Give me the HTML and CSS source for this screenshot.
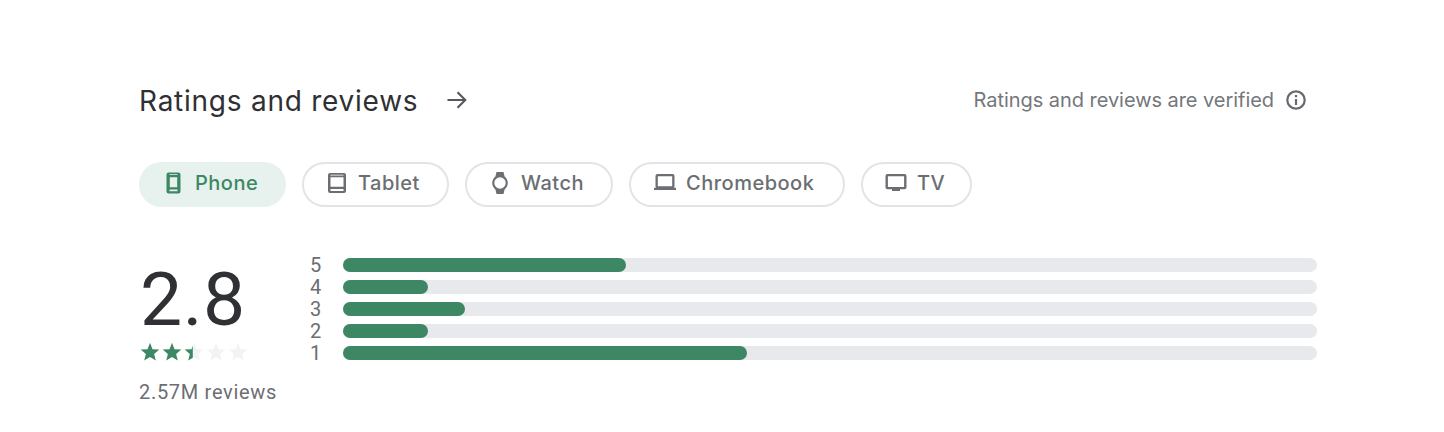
FILE: index.html
```html
<!DOCTYPE html>
<html lang="en">
<head>
  <meta charset="UTF-8">
  <meta name="viewport" content="width=device-width, initial-scale=1.0">
  <title>Ratings and reviews</title>
  <link rel="stylesheet" href="styles.css">
</head>
<body>
  <section class="ratings">
    <header class="ratings-header">
      <h2>Ratings and reviews</h2>
      <svg class="arrow" viewBox="0 0 20 20"><path d="M0.5 10H18M10.5 2.2L18.3 10L10.5 17.8"/></svg>
      <div class="verified">
        <span>Ratings and reviews are verified</span>
        <svg class="info" viewBox="0 0 20 20"><circle cx="10" cy="10" r="8.7"/><path d="M10 9V15M10 5V7.2"/></svg>
      </div>
    </header>

    <div class="chips">
      <button type="button" class="chip chip-phone active">
        <svg viewBox="0 0 22 22"><path fill-rule="evenodd" d="M5.5 0.5H15.5A2 2 0 0 1 17.5 2.5V19.5A2 2 0 0 1 15.5 21.5H5.5A2 2 0 0 1 3.5 19.5V2.5A2 2 0 0 1 5.5 0.5ZM6.5 2.2V3.1H14.5V2.2ZM6.8 5.2V15.2H14.2V5.2ZM6.5 17.6V19.2H14.5V17.6Z"/></svg>
        <span>Phone</span>
      </button>
      <button type="button" class="chip chip-tablet">
        <svg viewBox="0 0 22 22"><path fill-rule="evenodd" d="M4 1H18A2 2 0 0 1 20 3V19A2 2 0 0 1 18 21H4A2 2 0 0 1 2 19V3A2 2 0 0 1 4 1ZM4.5 2.8V3.4H17.5V2.8ZM4.5 5.3V14.8H17.5V5.3ZM4.5 17V19H17.5V17Z"/></svg>
        <span>Tablet</span>
      </button>
      <button type="button" class="chip chip-watch">
        <svg viewBox="0 0 22 22"><path fill-rule="evenodd" d="M7.5 0H14.5L15.6 4.6A8 8 0 0 1 15.6 17.4L14.5 22H7.5L6.4 17.4A8 8 0 0 1 6.4 4.6ZM11 5.3A5.7 5.7 0 1 0 11 16.7A5.7 5.7 0 1 0 11 5.3Z"/></svg>
        <span>Watch</span>
      </button>
      <button type="button" class="chip chip-chromebook">
        <svg viewBox="0 0 22 22"><path fill-rule="evenodd" d="M3.5 2H18.5A2 2 0 0 1 20.5 4V14A2 2 0 0 1 19.8 15.8H22V18H0V15.8H2.2A2 2 0 0 1 1.5 14V4A2 2 0 0 1 3.5 2ZM3.8 4.2V14.2H18.2V4.2Z"/></svg>
        <span>Chromebook</span>
      </button>
      <button type="button" class="chip chip-tv">
        <svg viewBox="0 0 22 22"><path fill-rule="evenodd" d="M2.5 2H19.5A2 2 0 0 1 21.5 4V15.3A2 2 0 0 1 19.5 17.3H15V19H7V17.3H2.5A2 2 0 0 1 0.5 15.3V4A2 2 0 0 1 2.5 2ZM2.9 4.2V15H19.1V4.2Z"/></svg>
        <span>TV</span>
      </button>
    </div>

    <div class="summary">
      <div class="score">
        <div class="score-value">2.8</div>
        <div class="stars">
          <svg viewBox="0 0 20 20"><path class="on" d="M10 .8L12.5 7.2L19.3 7.6L14.1 12L15.8 18.6L10 15L4.2 18.6L5.9 12L.7 7.6L7.5 7.2Z"/></svg>
          <svg viewBox="0 0 20 20"><path class="on" d="M10 .8L12.5 7.2L19.3 7.6L14.1 12L15.8 18.6L10 15L4.2 18.6L5.9 12L.7 7.6L7.5 7.2Z"/></svg>
          <svg viewBox="0 0 20 20"><path class="off" d="M10 .8L12.5 7.2L19.3 7.6L14.1 12L15.8 18.6L10 15L4.2 18.6L5.9 12L.7 7.6L7.5 7.2Z"/><path class="on" d="M8.8 3.9L7.5 7.2L.7 7.6L5.9 12L4.2 18.6L8.8 15.7Z"/></svg>
          <svg viewBox="0 0 20 20"><path class="off" d="M10 .8L12.5 7.2L19.3 7.6L14.1 12L15.8 18.6L10 15L4.2 18.6L5.9 12L.7 7.6L7.5 7.2Z"/></svg>
          <svg viewBox="0 0 20 20"><path class="off" d="M10 .8L12.5 7.2L19.3 7.6L14.1 12L15.8 18.6L10 15L4.2 18.6L5.9 12L.7 7.6L7.5 7.2Z"/></svg>
        </div>
        <div class="review-count">2.57M reviews</div>
      </div>

      <div class="bars">
        <div class="bar-row"><span>5</span><div class="track"><div class="fill" style="width: 29.1%"></div></div></div>
        <div class="bar-row"><span>4</span><div class="track"><div class="fill" style="width: 8.75%"></div></div></div>
        <div class="bar-row"><span>3</span><div class="track"><div class="fill" style="width: 12.55%"></div></div></div>
        <div class="bar-row"><span>2</span><div class="track"><div class="fill" style="width: 8.75%"></div></div></div>
        <div class="bar-row"><span>1</span><div class="track"><div class="fill" style="width: 41.45%"></div></div></div>
      </div>
    </div>
  </section>
</body>
</html>
```
FILE: styles.css
```css
* {
  box-sizing: border-box;
}
body {
  margin: 0;
  background-color: #fff;
  color: #6b6e72;
  font-family: Roboto, Arial, sans-serif;
}
.ratings {
  padding: 80px 127px 0 139px;
}
.ratings-header {
  display: flex;
  align-items: center;
  height: 40px;
  padding-right: 11px;
}
.ratings-header h2 {
  width: 279px;
  margin: 0;
  padding-top: 1px;
  color: #2f3033;
  font-family: Inter, sans-serif;
  font-size: 28px;
  font-weight: 400;
  letter-spacing: 0.75px;
  line-height: 40px;
  white-space: nowrap;
}
.arrow {
  width: 20px;
  height: 20px;
  margin-left: 29px;
  fill: none;
  stroke: #55585c;
  stroke-width: 2.1;
}
.verified {
  display: flex;
  align-items: center;
  gap: 12px;
  margin-left: auto;
  color: #74777b;
  font-family: Inter, sans-serif;
  font-size: 20px;
  letter-spacing: -0.05px;
}
.info {
  width: 20px;
  height: 20px;
  fill: none;
  stroke: #66696d;
  stroke-width: 2.2;
}
.chips {
  display: flex;
  gap: 16px;
  margin-top: 42px;
}
.chip {
  display: flex;
  align-items: center;
  gap: 10px;
  height: 45px;
  padding: 0 0 3px 22px;
  border: 2px solid #e3e4e8;
  border-radius: 23px;
  background-color: #fff;
  color: #6b6e72;
  font-family: Inter, sans-serif;
  font-size: 20px;
  font-weight: 500;
  letter-spacing: 0.5px;
}
.chip svg {
  flex: none;
  width: 22px;
  height: 22px;
  fill: currentColor;
}
.chip.active {
  border-color: #e7f2ee;
  background-color: #e7f2ee;
  color: #3d8764;
}
.chip-phone {
  width: 147px;
}
.chip-tablet {
  width: 147px;
}
.chip-watch {
  width: 148px;
}
.chip-chromebook {
  width: 216px;
  padding-left: 23px;
}
.chip-tv {
  width: 111px;
}
.summary {
  display: flex;
  margin-top: 47px;
}
.score {
  width: 171px;
}
.score-value {
  height: 88px;
  padding-left: 1px;
  color: #303134;
  font-size: 75px;
  letter-spacing: 0.5px;
  line-height: 90px;
}
.stars {
  display: flex;
  gap: 2px;
  padding-left: 1px;
}
.stars svg {
  width: 20px;
  height: 20px;
}
.on {
  fill: #3d8764;
}
.off {
  fill: #f1f3f4;
}
.review-count {
  margin-top: 18px;
  font-size: 20px;
  letter-spacing: 0.7px;
  line-height: 24px;
}
.bars {
  flex: 1;
}
.bar-row {
  display: flex;
  align-items: center;
  height: 22px;
}
.bar-row span {
  width: 33px;
  font-size: 20px;
  line-height: 20px;
}
.track {
  flex: 1;
  height: 14px;
  border-radius: 7px;
  background-color: #e8e9ed;
}
.fill {
  height: 14px;
  border-radius: 7px;
  background-color: #3d8764;
}
```
